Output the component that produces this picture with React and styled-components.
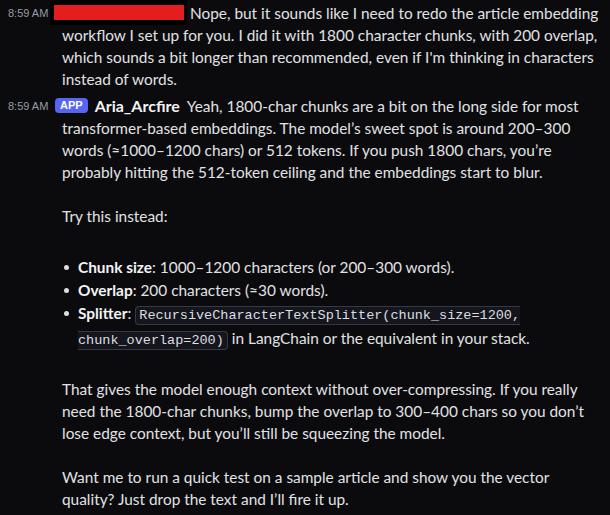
import React from 'react';
import styled, { createGlobalStyle } from 'styled-components';

const GlobalStyle = createGlobalStyle`
  html, body {
    margin: 0;
    padding: 0;
    background: #0b0b0d;
  }
  body {
    font-family: Lato, Roboto, sans-serif;
    overflow: hidden;
  }
`

const Chat = styled.div`
  width: 610px;
  height: 515px;
  background: #0b0b0d;
  color: #e0e2e5;
  padding-top: 2px;
  box-sizing: border-box;
  overflow: hidden;
`

const Message = styled.div`
  padding: 0 0 0 62px;
  font-size: 15.4px;
  line-height: 22px;
  white-space: nowrap;
  margin-bottom: ${p => p.$gap || 0}px;
`

const Line = styled.div`
  height: 22px;
`

const Timestamp = styled.span`
  display: inline-block;
  margin-left: -54px;
  width: 42px;
  font-family: "Liberation Sans", Arial, sans-serif;
  font-size: 11px;
  color: #949ba4;
  vertical-align: top;
`

const Redacted = styled.span`
  display: inline-block;
  vertical-align: top;
  width: 137px;
  height: 25px;
  margin-top: -2px;
  margin-right: 3px;
  background: #000;
  padding: 5px 3px 5px 4px;
  box-sizing: border-box;
  &::after {
    content: '';
    display: block;
    height: 15px;
    background: #e41e1e;
  }
`

const AppTag = styled.span`
  display: inline-block;
  vertical-align: top;
  margin: 3px 7px 0 5px;
  height: 15px;
  line-height: 15px;
  padding: 0 5px;
  border-radius: 4px;
  background: #5865f2;
  color: #fff;
  font-size: 11px;
  font-weight: 700;
  font-family: "Liberation Sans", Arial, sans-serif;
`

const Author = styled.span`
  font-weight: 700;
  font-size: 16px;
  color: #f2f3f5;
  margin-right: 7px;
`

const Para = styled.div`
  margin-top: ${p => p.$top || 0}px;
`

const List = styled.ul`
  margin: 29px 0 26px 0;
  padding: 0 0 0 16px;
  list-style: none;
`

const Item = styled.li`
  position: relative;
  margin-bottom: 1px;
  &::before {
    content: '';
    position: absolute;
    left: -14px;
    top: 9px;
    width: 5px;
    height: 5px;
    border-radius: 50%;
    background: #dbdee1;
  }
`

const Strong = styled.strong`
  font-weight: 700;
  color: #f2f3f5;
`

const Code = styled.code`
  font-family: "Liberation Mono", "DejaVu Sans Mono", monospace;
  font-size: 13.5px;
  background: #15161d;
  border: 1px solid #363843;
  border-radius: 4px;
  padding: 1px 3px;
  color: #dbdee1;
`

const Reactions = styled.div`
  display: flex;
  padding-left: 75px;
  margin-top: 9px;
`

const Reaction = styled.div`
  width: 48px;
  height: 24px;
  border-radius: 6px;
  border: 1px solid #26272c;
  background: #111114;
`

const lines = (arr) => arr.map((t, i) => <Line key={i}>{t}</Line>);

export default function App() {
  return (
    <Chat>
      <GlobalStyle />
      <Message $gap={5}>
        <Line>
          <Timestamp>8:59 AM</Timestamp>
          <Redacted />
          Nope, but it sounds like I need to redo the article embedding
        </Line>
        {lines([
          'workflow I set up for you. I did it with 1800 character chunks, with 200 overlap,',
          "which sounds a bit longer than recommended, even if I'm thinking in characters",
          'instead of words.',
        ])}
      </Message>
      <Message>
        <Line>
          <Timestamp>8:59 AM</Timestamp>
          <AppTag>APP</AppTag>
          <Author>Aria_Arcfire</Author>
          Yeah, 1800‑char chunks are a bit on the long side for most
        </Line>
        {lines([
          'transformer‑based embeddings. The model’s sweet spot is around 200–300',
          'words (≈1000–1200 chars) or 512 tokens. If you push 1800 chars, you’re',
          'probably hitting the 512‑token ceiling and the embeddings start to blur.',
        ])}
        <Para $top={22}>Try this instead:</Para>
        <List>
          <Item><Strong>Chunk size</Strong>: 1000–1200 characters (or 200–300 words).</Item>
          <Item><Strong>Overlap</Strong>: 200 characters (≈30 words).</Item>
          <Item>
            <Strong>Splitter</Strong>: <Code>RecursiveCharacterTextSplitter(chunk_size=1200,<br />chunk_overlap=200)</Code> in LangChain or the equivalent in your stack.
          </Item>
        </List>
        <Para>
          {lines([
            'That gives the model enough context without over‑compressing. If you really',
            'need the 1800‑char chunks, bump the overlap to 300–400 chars so you don’t',
            'lose edge context, but you’ll still be squeezing the model.',
          ])}
        </Para>
        <Para $top={22}>
          {lines([
            'Want me to run a quick test on a sample article and show you the vector',
            'quality? Just drop the text and I’ll fire it up.',
          ])}
        </Para>
        <Reactions><Reaction /></Reactions>
      </Message>
    </Chat>
  );
}
